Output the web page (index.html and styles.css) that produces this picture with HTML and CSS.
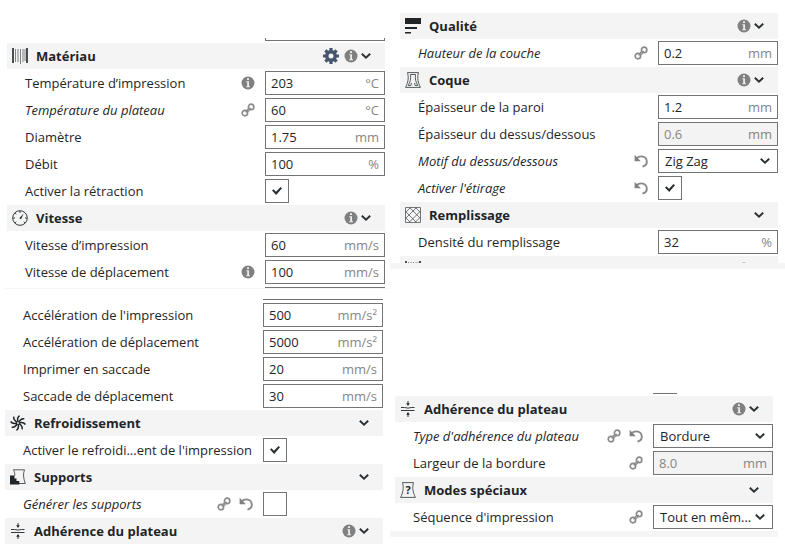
FILE: index.html
```html
<!DOCTYPE html>
<html lang="fr">

<head>
    <meta charset="UTF-8">
    <meta name="viewport" content="width=device-width, initial-scale=1.0">
    <title>Paramètres d'impression</title>
    <link rel="stylesheet" href="styles.css">
</head>

<body>
    <!-- icon set -->
    <svg class="sprite" aria-hidden="true">
        <symbol id="i-material" viewBox="0 0 16 16">
            <path d="M1 0v15M15 0v15" stroke="#1f2528" stroke-width="1.6" />
            <path d="M3.500 1v13M6 1v13M8.500 1v15M11 1v13M13 1v12" stroke="#666" stroke-width=".8" />
        </symbol>
        <symbol id="i-speed" viewBox="0 0 16 16">
            <circle cx="8" cy="8" r="7.300" fill="none" stroke="#33393c" stroke-width="1" />
            <path d="M8 1v2M1 8h2M13 8h2M3 3l1.300 1.300M3 13l1.300-1.300M13 13l-1.300-1.300" stroke="#33393c" stroke-width=".9" />
            <path d="M11.700 3.500L9 9.200 7.300 8.200z" fill="#1f2528" />
        </symbol>
        <symbol id="i-fan" viewBox="0 0 16 16">
            <g fill="none" stroke="#1f2528" stroke-width="1.500">
                <path id="blade" d="M8 7C7.200 4.500 7.500 2 9.500.6" />
                <use href="#blade" transform="rotate(45 8 8)" />
                <use href="#blade" transform="rotate(90 8 8)" />
                <use href="#blade" transform="rotate(135 8 8)" />
                <use href="#blade" transform="rotate(180 8 8)" />
                <use href="#blade" transform="rotate(225 8 8)" />
                <use href="#blade" transform="rotate(270 8 8)" />
                <use href="#blade" transform="rotate(315 8 8)" />
            </g>
        </symbol>
        <symbol id="i-support" viewBox="0 0 16 16">
            <path d="M3.500.8h11C13 4.500 13.200 9 15.300 14.500H9" fill="none" stroke="#44494c" stroke-width=".9" />
            <path d="M3.500.8c1 2 1.500 4 1.300 6" fill="none" stroke="#44494c" stroke-width=".9" />
            <path d="M0 6.500h4.500v3h2v2.500h2.800v3.500H0z" fill="#1f2528" />
        </symbol>
        <symbol id="i-adhesion" viewBox="0 0 16 16">
            <path d="M1 6.500h3.500l3.500.6 3.500-.6H14.500M1 9.500h13.500" fill="none" stroke="#33393c" stroke-width="1" />
            <path d="M8 0v3M8 12v4" stroke="#33393c" stroke-width="1" />
            <path d="M6.200 2.300h3.600L8 5zM6.200 13.700h3.600L8 11z" fill="#1f2528" />
        </symbol>
        <symbol id="i-quality" viewBox="0 0 16 16">
            <path d="M0 0h16v6H0zM0 9h12v2H0zM0 14h6v1.500H0z" fill="#1f2528" />
        </symbol>
        <symbol id="i-shell" viewBox="0 0 16 16">
            <g fill="none" stroke="#44494c" stroke-width=".9">
                <path d="M2.500.6h11C12 6 13 10.500 15.400 15.400H.6C3 10.500 4 6 2.500.6z" />
                <path d="M5.500 2.500C6.200 7 5 10.500 3.200 13.500h2.600L6.500 11M10.500 2.500C9.800 7 11 10.500 12.800 13.500h-2.600L9.500 11M5.500 2.500h5" />
            </g>
        </symbol>
        <symbol id="i-infill" viewBox="0 0 16 16">
            <path d="M.5.5h15v15H.5zM.5 5.500l5-5M.5 11.500l11-11M4 15.500L15.500 4M10 15.500l5.500-5.500M10.500.5l5 5M4.500.5l11 11M.5 4.500l11 11M.5 10.500l5 5" fill="none" stroke="#55595c" stroke-width=".8" />
        </symbol>
        <symbol id="i-special" viewBox="0 0 16 16">
            <path d="M2.500.6h11C12 6 13 10.500 15.400 15.400H.6C3 10.500 4 6 2.500.6z" fill="none" stroke="#44494c" stroke-width=".9" />
            <text x="8" y="12" class="mark" text-anchor="middle">?</text>
        </symbol>
        <symbol id="i-info" viewBox="0 0 14 14">
            <circle cx="7" cy="7" r="6.500" fill="#808080" />
            <path d="M6 2.300h2v1.800H6zM5.300 5.300H8v5h1v1H5.200v-1h1V6.300h-.9z" fill="#ececec" />
        </symbol>
        <symbol id="i-link" viewBox="0 0 14 14">
            <g fill="none" stroke="#8a8a8a" stroke-width="1.700">
                <circle cx="3.900" cy="10.100" r="2.700" />
                <circle cx="10.100" cy="3.900" r="2.700" />
                <path d="M4.500 9C6 8.800 5.500 5.500 8.500 6M5.800 8.600C9 8.800 8.500 5.500 9.800 5.200" stroke-width="1.300" />
            </g>
        </symbol>
        <symbol id="i-reset" viewBox="0 0 14 14">
            <path d="M2.500 4.500C6 1 12.500 2 12.800 7.500c.1 2.500-1.500 4.500-4.300 5" fill="none" stroke="#8a8a8a" stroke-width="1.900" />
            <path d="M.6.800v6.400h6.200z" fill="#808080" />
        </symbol>
        <symbol id="i-gear" viewBox="0 0 16 16">
            <circle cx="8" cy="8" r="4.200" fill="none" stroke="#46566f" stroke-width="3.400" />
            <path d="M8 0v3M8 13v3M0 8h3M13 8h3M2.400 2.400l2.100 2.100M11.500 11.500l2.100 2.100M2.400 13.600l2.100-2.100M11.500 4.500l2.100-2.100" stroke="#46566f" stroke-width="3.200" />
        </symbol>
        <symbol id="i-chevron" viewBox="0 0 10 10">
            <path d="M.8 2.800L5 6.800l4.200-4" fill="none" stroke="#2b3033" stroke-width="1.900" />
        </symbol>
    </svg>

    <main class="settings">
        <div class="column">
            <section class="panel panelMaterial">
                <div class="cutField"></div>
                <div class="category">
                    <svg class="catIcon"><use href="#i-material" /></svg>
                    <h2>Matériau</h2>
                    <button class="tool gear" aria-label="Configurer"><svg class="gearIcon"><use href="#i-gear" /></svg></button>
                    <svg class="icon"><use href="#i-info" /></svg>
                    <button class="tool" aria-label="Replier"><svg class="chevron"><use href="#i-chevron" /></svg></button>
                </div>
                <div class="row">
                    <label for="tempPrint">Température d’impression</label>
                    <svg class="icon"><use href="#i-info" /></svg>
                    <div class="field"><input id="tempPrint" type="text" value="203"><span class="unit">°C</span></div>
                </div>
                <div class="row changed">
                    <label for="tempBed">Température du plateau</label>
                    <svg class="icon"><use href="#i-link" /></svg>
                    <div class="field"><input id="tempBed" type="text" value="60"><span class="unit">°C</span></div>
                </div>
                <div class="row">
                    <label for="diameter">Diamètre</label>
                    <div class="field"><input id="diameter" type="text" value="1.75"><span class="unit">mm</span></div>
                </div>
                <div class="row">
                    <label for="flow">Débit</label>
                    <div class="field"><input id="flow" type="text" value="100"><span class="unit">%</span></div>
                </div>
                <div class="row">
                    <label for="retract">Activer la rétraction</label>
                    <div class="slot"><input id="retract" class="check" type="checkbox" checked></div>
                </div>
                <div class="category">
                    <svg class="catIcon"><use href="#i-speed" /></svg>
                    <h2>Vitesse</h2>
                    <svg class="icon"><use href="#i-info" /></svg>
                    <button class="tool" aria-label="Replier"><svg class="chevron"><use href="#i-chevron" /></svg></button>
                </div>
                <div class="row">
                    <label for="speedPrint">Vitesse d’impression</label>
                    <div class="field"><input id="speedPrint" type="text" value="60"><span class="unit">mm/s</span></div>
                </div>
                <div class="row">
                    <label for="speedTravel">Vitesse de déplacement</label>
                    <svg class="icon"><use href="#i-info" /></svg>
                    <div class="field"><input id="speedTravel" type="text" value="100"><span class="unit">mm/s</span></div>
                </div>
                <div class="cutLine"></div>
            </section>
            <div class="strip thin"></div>

            <section class="panel panelSpeed">
                <div class="cutLine"></div>
                <div class="row">
                    <label for="accPrint">Accélération de l'impression</label>
                    <div class="field"><input id="accPrint" type="text" value="500"><span class="unit">mm/s²</span></div>
                </div>
                <div class="row">
                    <label for="accTravel">Accélération de déplacement</label>
                    <div class="field"><input id="accTravel" type="text" value="5000"><span class="unit">mm/s²</span></div>
                </div>
                <div class="row">
                    <label for="jerkPrint">Imprimer en saccade</label>
                    <div class="field"><input id="jerkPrint" type="text" value="20"><span class="unit">mm/s</span></div>
                </div>
                <div class="row">
                    <label for="jerkTravel">Saccade de déplacement</label>
                    <div class="field"><input id="jerkTravel" type="text" value="30"><span class="unit">mm/s</span></div>
                </div>
                <div class="category">
                    <svg class="catIcon"><use href="#i-fan" /></svg>
                    <h2>Refroidissement</h2>
                    <button class="tool" aria-label="Replier"><svg class="chevron"><use href="#i-chevron" /></svg></button>
                </div>
                <div class="row">
                    <label for="cooling">Activer le refroidi...ent de l'impression</label>
                    <div class="slot"><input id="cooling" class="check" type="checkbox" checked></div>
                </div>
                <div class="category">
                    <svg class="catIcon"><use href="#i-support" /></svg>
                    <h2>Supports</h2>
                    <button class="tool" aria-label="Replier"><svg class="chevron"><use href="#i-chevron" /></svg></button>
                </div>
                <div class="row changed">
                    <label for="supports">Générer les supports</label>
                    <svg class="icon"><use href="#i-link" /></svg>
                    <button class="tool" aria-label="Rétablir"><svg class="icon"><use href="#i-reset" /></svg></button>
                    <div class="slot"><input id="supports" class="check" type="checkbox"></div>
                </div>
                <div class="category">
                    <svg class="catIcon"><use href="#i-adhesion" /></svg>
                    <h2>Adhérence du plateau</h2>
                    <svg class="icon"><use href="#i-info" /></svg>
                    <button class="tool" aria-label="Replier"><svg class="chevron"><use href="#i-chevron" /></svg></button>
                </div>
            </section>
        </div>

        <div class="column">
            <section class="panel panelQuality">
                <div class="category">
                    <svg class="catIcon"><use href="#i-quality" /></svg>
                    <h2>Qualité</h2>
                    <svg class="icon"><use href="#i-info" /></svg>
                    <button class="tool" aria-label="Replier"><svg class="chevron"><use href="#i-chevron" /></svg></button>
                </div>
                <div class="row changed">
                    <label for="layer">Hauteur de la couche</label>
                    <svg class="icon"><use href="#i-link" /></svg>
                    <div class="field"><input id="layer" type="text" value="0.2"><span class="unit">mm</span></div>
                </div>
                <div class="category">
                    <svg class="catIcon"><use href="#i-shell" /></svg>
                    <h2>Coque</h2>
                    <svg class="icon"><use href="#i-info" /></svg>
                    <button class="tool" aria-label="Replier"><svg class="chevron"><use href="#i-chevron" /></svg></button>
                </div>
                <div class="row">
                    <label for="wall">Épaisseur de la paroi</label>
                    <div class="field"><input id="wall" type="text" value="1.2"><span class="unit">mm</span></div>
                </div>
                <div class="row">
                    <label for="topBottom">Épaisseur du dessus/dessous</label>
                    <div class="field disabled"><input id="topBottom" type="text" value="0.6" disabled><span class="unit">mm</span></div>
                </div>
                <div class="row changed">
                    <label for="pattern">Motif du dessus/dessous</label>
                    <button class="tool" aria-label="Rétablir"><svg class="icon"><use href="#i-reset" /></svg></button>
                    <div class="field drop">
                        <select id="pattern"><option>Zig Zag</option></select>
                        <svg class="chevron"><use href="#i-chevron" /></svg>
                    </div>
                </div>
                <div class="row changed">
                    <label for="ironing">Activer l'étirage</label>
                    <button class="tool" aria-label="Rétablir"><svg class="icon"><use href="#i-reset" /></svg></button>
                    <div class="slot"><input id="ironing" class="check" type="checkbox" checked></div>
                </div>
                <div class="category">
                    <svg class="catIcon"><use href="#i-infill" /></svg>
                    <h2>Remplissage</h2>
                    <button class="tool" aria-label="Replier"><svg class="chevron"><use href="#i-chevron" /></svg></button>
                </div>
                <div class="row">
                    <label for="infill">Densité du remplissage</label>
                    <div class="field"><input id="infill" type="text" value="32"><span class="unit">%</span></div>
                </div>
                <!-- next category, scrolled out of the panel -->
                <div class="cutCategory">
                    <div class="category">
                        <svg class="catIcon"><use href="#i-material" /></svg>
                        <svg class="icon last"><use href="#i-info" /></svg>
                    </div>
                </div>
            </section>
            <div class="strip"></div>

            <section class="panel panelAdhesion">
                <div class="cutCheck"></div>
                <div class="category">
                    <svg class="catIcon"><use href="#i-adhesion" /></svg>
                    <h2>Adhérence du plateau</h2>
                    <svg class="icon"><use href="#i-info" /></svg>
                    <button class="tool" aria-label="Replier"><svg class="chevron"><use href="#i-chevron" /></svg></button>
                </div>
                <div class="row changed">
                    <label for="adhesion">Type d'adhérence du plateau</label>
                    <svg class="icon"><use href="#i-link" /></svg>
                    <button class="tool" aria-label="Rétablir"><svg class="icon"><use href="#i-reset" /></svg></button>
                    <div class="field drop">
                        <select id="adhesion"><option>Bordure</option></select>
                        <svg class="chevron"><use href="#i-chevron" /></svg>
                    </div>
                </div>
                <div class="row">
                    <label for="brim">Largeur de la bordure</label>
                    <svg class="icon"><use href="#i-link" /></svg>
                    <div class="field disabled"><input id="brim" type="text" value="8.0" disabled><span class="unit">mm</span></div>
                </div>
                <div class="category">
                    <svg class="catIcon"><use href="#i-special" /></svg>
                    <h2>Modes spéciaux</h2>
                    <button class="tool" aria-label="Replier"><svg class="chevron"><use href="#i-chevron" /></svg></button>
                </div>
                <div class="row">
                    <label for="sequence">Séquence d'impression</label>
                    <svg class="icon"><use href="#i-link" /></svg>
                    <div class="field drop">
                        <select id="sequence"><option>Tout en mêm...</option></select>
                        <svg class="chevron"><use href="#i-chevron" /></svg>
                    </div>
                </div>
            </section>
            <div class="strip end"></div>
        </div>
    </main>
</body>

</html>
```

FILE: styles.css
```css
* {
    box-sizing: border-box;
}

body {
    margin: 0;
    background: #fff;
    color: #1f2528;
    font: 13px/18px "Open Sans", "Noto Sans", sans-serif;
}

.sprite {
    display: none;
}

.mark {
    font: bold 11px "Open Sans", "Noto Sans", sans-serif;
    fill: #1f2528;
}

.settings {
    display: grid;
    grid-template-columns: 390fr 395fr;
}

.panelMaterial {
    margin: 38px 5px 0 7px;
}

.panelSpeed {
    margin: 10px 7px 0 5px;
}

.panelQuality {
    margin: 13px 7px 0 10px;
}

.panelAdhesion {
    margin: 123px 12px 0 5px;
}

/* category bar */
.category {
    display: flex;
    align-items: center;
    height: 26px;
    margin-bottom: 1px;
    padding: 0 14px 0 5px;
    background: #f4f4f4;
}

.category h2 {
    flex: 1;
    margin: 0 0 0 8px;
    font-size: 13px;
    line-height: 18px;
}

.category .tool {
    margin-left: 3px;
}

.category .gear {
    margin-right: 5px;
}

.catIcon {
    width: 16px;
    height: 16px;
}

.icon {
    display: block;
    flex: none;
    width: 14px;
    height: 14px;
}

.gearIcon {
    display: block;
    width: 16px;
    height: 16px;
}

.chevron {
    display: block;
    width: 10px;
    height: 10px;
}

.tool {
    padding: 0;
    border: 0;
    background: none;
    cursor: pointer;
}

/* one setting */
.row {
    display: flex;
    align-items: center;
    gap: 8px;
    height: 27px;
    padding: 1px 0 2px 18px;
}

.row label {
    flex: 1;
    white-space: nowrap;
}

.changed label {
    font-style: italic;
}

.field,
.slot {
    flex: none;
    width: 120px;
    height: 24px;
    margin-left: 2px;
}

.field {
    display: flex;
    align-items: center;
    padding: 0 5px;
    border: 1px solid #737476;
    background: #fff;
}

.field input {
    flex: 1;
    min-width: 0;
    padding: 0;
    border: 0;
    background: none;
    color: #1f2528;
    font: inherit;
}

.unit {
    color: #868686;
}

.disabled {
    background: #f3f3f3;
}

.disabled input {
    color: #868686;
}

.drop {
    display: grid;
    grid-template-columns: 1fr 10px;
    padding: 0 7px 0 6px;
}

.drop select {
    grid-area: 1 / 1 / 2 / 3;
    appearance: none;
    padding: 0;
    border: 0;
    background: none;
    color: #1f2528;
    font: inherit;
}

.drop .chevron {
    grid-area: 1 / 2 / 2 / 3;
    pointer-events: none;
}

.check {
    display: grid;
    place-items: center;
    appearance: none;
    width: 24px;
    height: 24px;
    margin: 0;
    border: 1px solid #737476;
    background: #fff;
}

.check:checked::before {
    content: "";
    width: 10px;
    height: 8px;
    background: #2b3033;
    clip-path: polygon(0 45%, 15% 28%, 40% 58%, 85% 0, 100% 15%, 42% 100%);
}

/* settings cut off by the edge of a panel */
.cutField,
.cutLine {
    width: 120px;
    margin-left: auto;
    border-bottom: 1px solid #737476;
}

.cutField {
    height: 3px;
    margin-bottom: 2px;
    border-left: 1px solid #737476;
    border-right: 1px solid #737476;
}

.cutLine {
    height: 2px;
}

.panelSpeed .cutLine {
    height: 1px;
    margin-bottom: 2px;
}

.cutCheck {
    width: 24px;
    height: 2px;
    margin: 0 96px 2px auto;
    border-bottom: 1px solid #737476;
}

.cutCategory {
    height: 7px;
    overflow: hidden;
}

.cutCategory .last {
    margin: 0 13px 0 auto;
}

.strip {
    height: 6px;
    background: #f5f5f5;
}

.thin {
    height: 1px;
    margin-left: 5px;
}

.end {
    margin-right: 7px;
}
```
